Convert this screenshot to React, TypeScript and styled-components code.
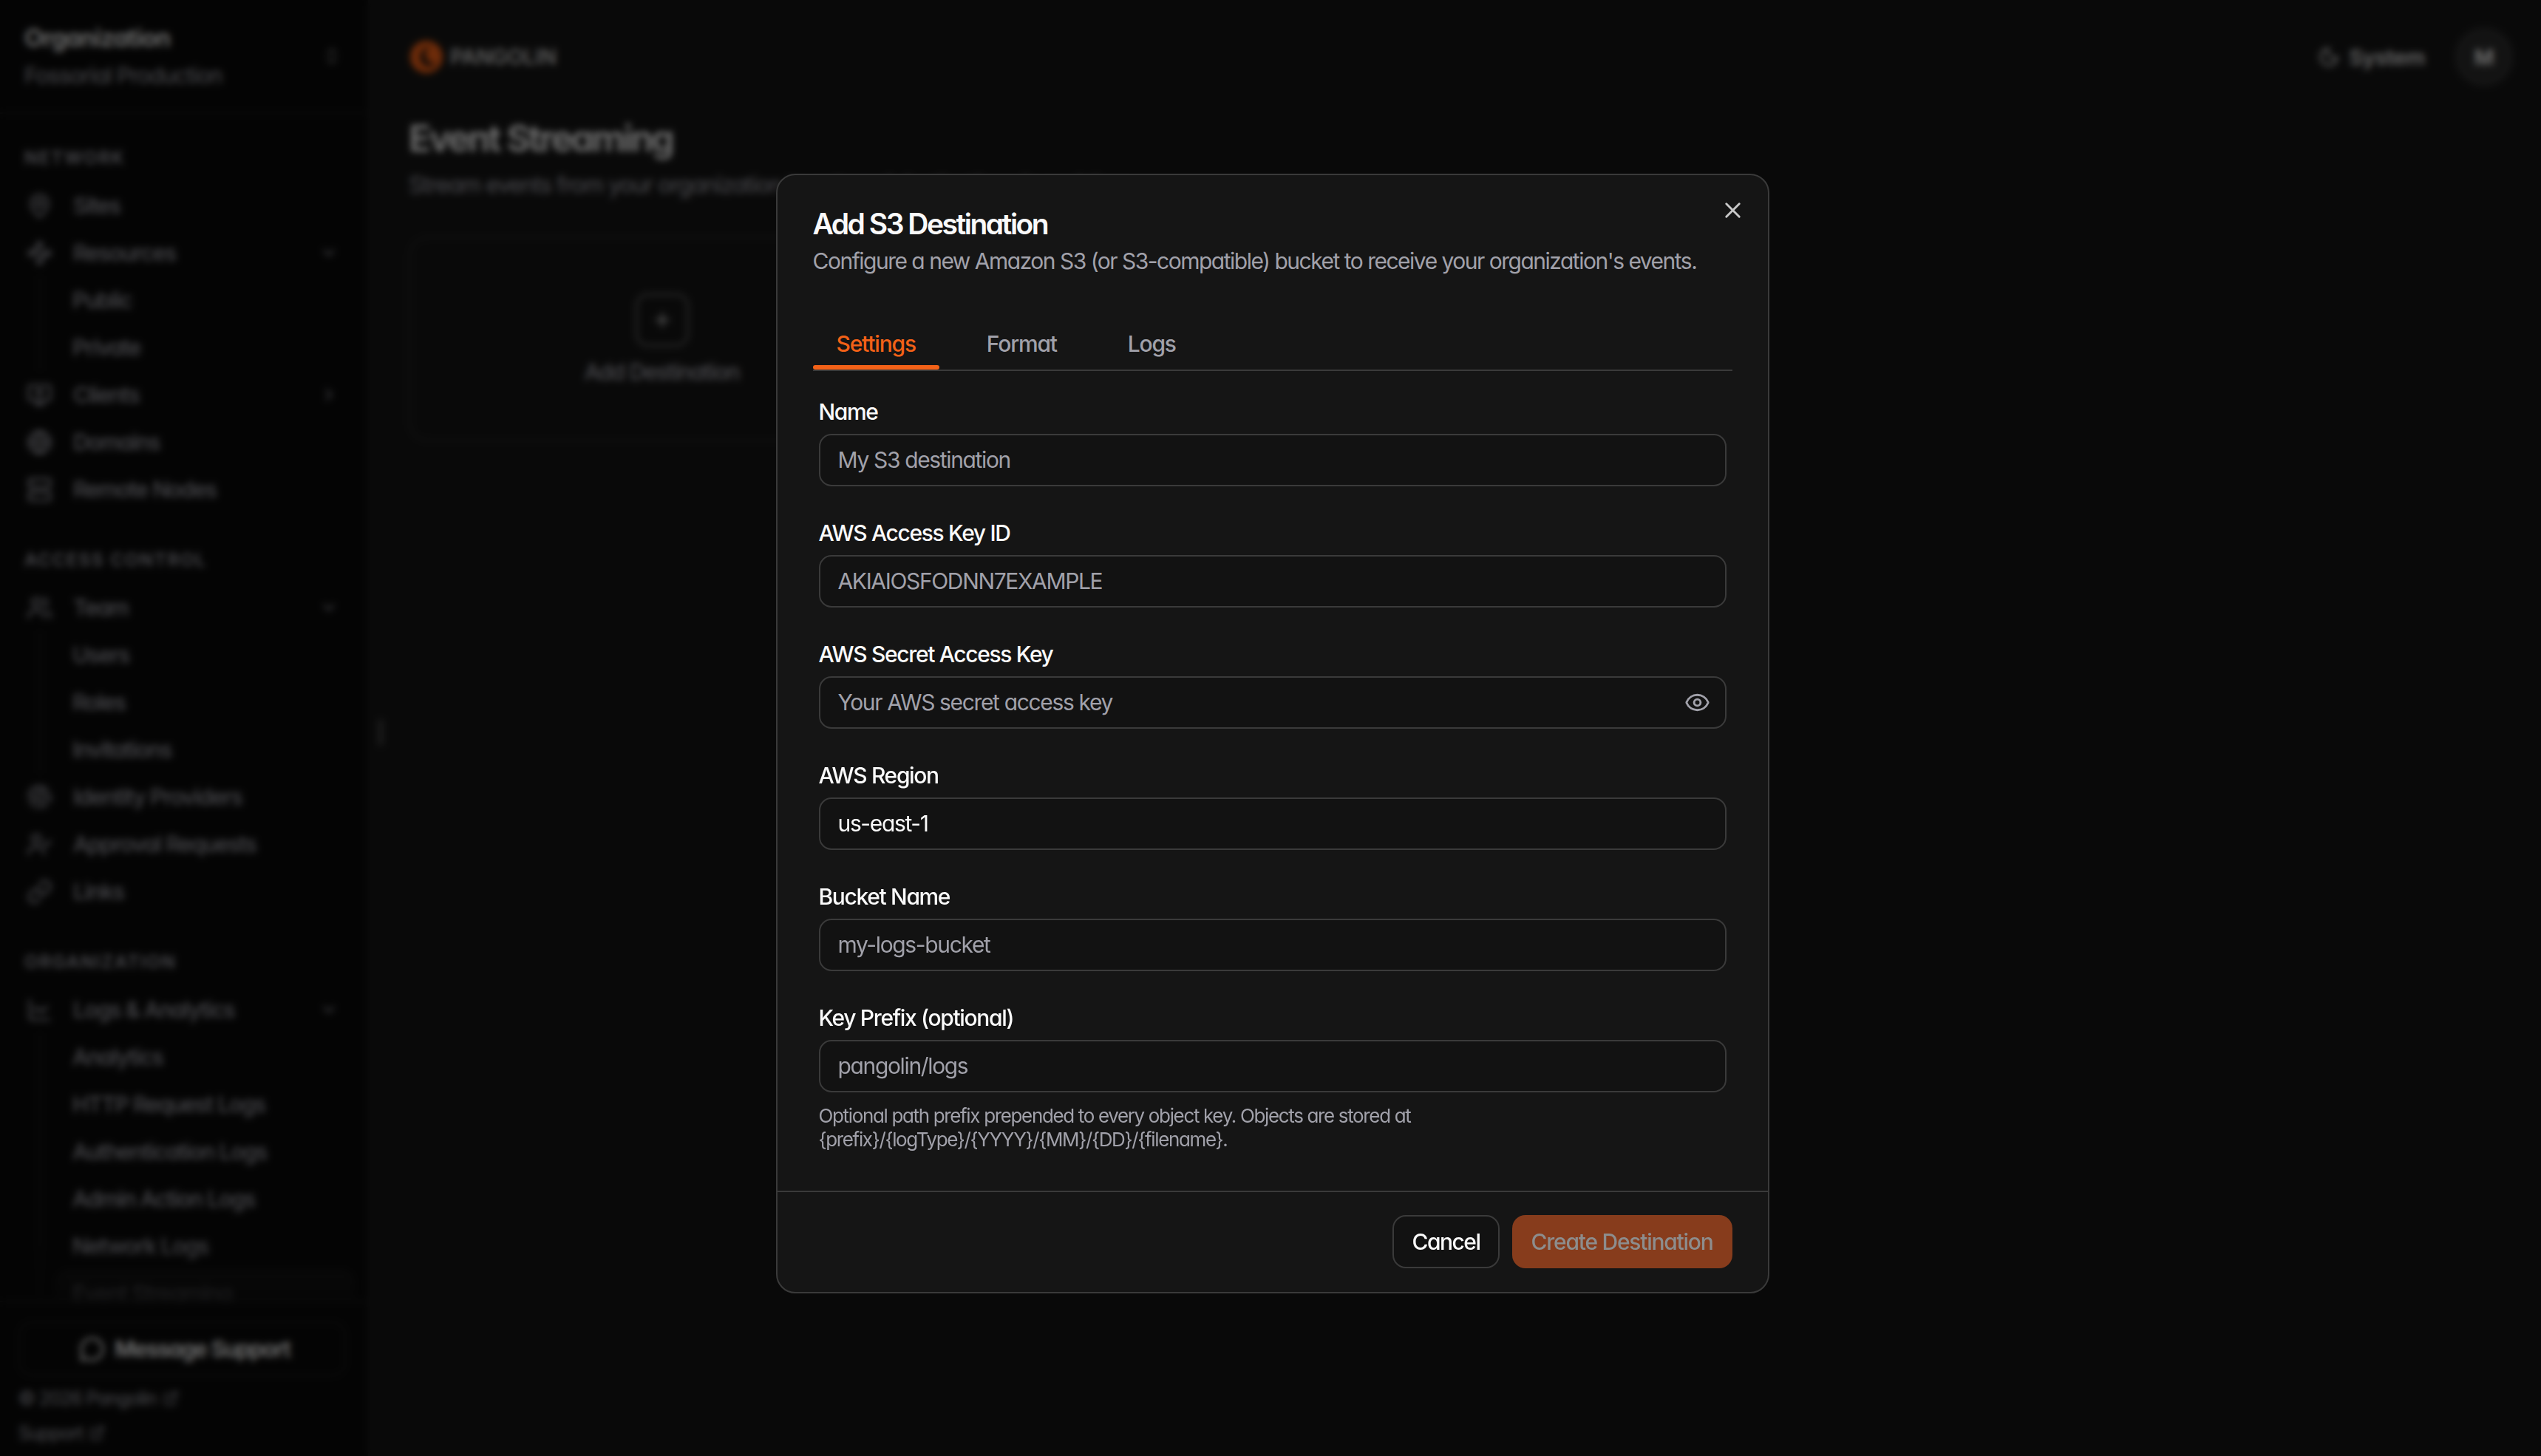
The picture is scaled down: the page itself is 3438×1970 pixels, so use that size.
import React from "react";
import styled, { createGlobalStyle } from "styled-components";
import {
  ChartLine,
  ChevronDown,
  ChevronRight,
  ChevronsUpDown,
  ExternalLink,
  Eye,
  Fingerprint,
  Globe,
  Link,
  MapPin,
  MessageCircle,
  MonitorUp,
  Moon,
  Plus,
  Server,
  UserCheck,
  Users,
  Waypoints,
  X,
} from "lucide-react";

const GlobalStyle = createGlobalStyle`
  html, body { margin: 0; padding: 0; height: 100%; background: #161616; }
  body { font-family: "Inter", "Liberation Sans", sans-serif; font-feature-settings: "cv11" 1; overflow: hidden; }
  * { box-sizing: border-box; }
`;

type NavEntry = {
  label: string;
  icon: React.ElementType;
  chevron?: "down" | "right";
  children?: string[];
};

const sections: { title: string; items: NavEntry[] }[] = [
  {
    title: "Network",
    items: [
      { label: "Sites", icon: MapPin },
      { label: "Resources", icon: Waypoints, chevron: "down", children: ["Public", "Private"] },
      { label: "Clients", icon: MonitorUp, chevron: "right" },
      { label: "Domains", icon: Globe },
      { label: "Remote Nodes", icon: Server },
    ],
  },
  {
    title: "Access Control",
    items: [
      { label: "Team", icon: Users, chevron: "down", children: ["Users", "Roles", "Invitations"] },
      { label: "Identity Providers", icon: Fingerprint },
      { label: "Approval Requests", icon: UserCheck },
      { label: "Links", icon: Link },
    ],
  },
  {
    title: "Organization",
    items: [
      {
        label: "Logs & Analytics",
        icon: ChartLine,
        chevron: "down",
        children: [
          "Analytics",
          "HTTP Request Logs",
          "Authentication Logs",
          "Admin Action Logs",
          "Network Logs",
          "Event Streaming",
        ],
      },
    ],
  },
];

const fields = [
  { label: "Name", value: "My S3 destination" },
  { label: "AWS Access Key ID", value: "AKIAIOSFODNN7EXAMPLE" },
  { label: "AWS Secret Access Key", value: "Your AWS secret access key", eye: true },
  { label: "AWS Region", value: "us-east-1", filled: true },
  { label: "Bucket Name", value: "my-logs-bucket" },
  { label: "Key Prefix (optional)", value: "pangolin/logs" },
];

const App: React.FC = () => (
  <>
    <GlobalStyle />
    <Page>
      <Sidebar>
        <OrgHeader>
          <div>
            <OrgLabel>Organization</OrgLabel>
            <OrgName>Fossorial Production</OrgName>
          </div>
          <ChevronsUpDown size={26} color="#8a8a8a" />
        </OrgHeader>
        <Nav>
          {sections.map((section) => (
            <Section key={section.title}>
              <SectionTitle>{section.title}</SectionTitle>
              {section.items.map((item) => (
                <div key={item.label}>
                  <NavRow>
                    <item.icon size={35} strokeWidth={2} />
                    <NavText>{item.label}</NavText>
                    {item.chevron === "down" && <ChevronDown size={26} />}
                    {item.chevron === "right" && <ChevronRight size={26} />}
                  </NavRow>
                  {item.children && (
                    <SubList>
                      {item.children.map((child) => (
                        <SubRow key={child} $active={child === "Event Streaming"}>
                          {child}
                        </SubRow>
                      ))}
                    </SubList>
                  )}
                </div>
              ))}
            </Section>
          ))}
        </Nav>
        <SidebarFooter>
          <SupportButton>
            <MessageCircle size={35} />
            Message Support
          </SupportButton>
          <FooterLink>
            © 2026 Pangolin <ExternalLink size={22} />
          </FooterLink>
          <FooterLink>
            Support <ExternalLink size={22} />
          </FooterLink>
        </SidebarFooter>
      </Sidebar>
      <ResizeHandle />
      <Main>
        <TopBar>
          <Brand>
            <svg width="46" height="50" viewBox="0 0 46 50">
              <circle cx="24" cy="25" r="22" fill="#f36117" />
              <path d="M30 11a14 14 0 0 0-9 25 14 14 0 0 0 17-3 11 11 0 0 1-8-22z" fill="#111" />
              <circle cx="30" cy="25" r="5" fill="#f36117" />
            </svg>
            <BrandName>PANGOLIN</BrandName>
          </Brand>
          <TopActions>
            <ThemeToggle>
              <Moon size={30} />
              System
            </ThemeToggle>
            <Avatar>M</Avatar>
          </TopActions>
        </TopBar>
        <PageTitle>Event Streaming</PageTitle>
        <PageSubtitle>Stream events from your organization to external destinations in real time.</PageSubtitle>
        <AddCard>
          <AddIcon>
            <Plus size={30} />
          </AddIcon>
          <AddLabel>Add Destination</AddLabel>
        </AddCard>
      </Main>
      <Overlay>
        <Modal>
          <CloseButton aria-label="Close">
            <X size={35} strokeWidth={2} />
          </CloseButton>
          <ModalHeader>
            <ModalTitle>Add S3 Destination</ModalTitle>
            <ModalDescription>
              Configure a new Amazon S3 (or S3-compatible) bucket to receive your organization's events.
            </ModalDescription>
            <Tabs>
              <Tab $active>Settings</Tab>
              <Tab>Format</Tab>
              <Tab>Logs</Tab>
            </Tabs>
          </ModalHeader>
          <Form>
            {fields.map((field) => (
              <Field key={field.label}>
                <FieldLabel>{field.label}</FieldLabel>
                <InputBox>
                  <InputText $filled={field.filled}>{field.value}</InputText>
                  {field.eye && <Eye size={35} color="#a1a1aa" />}
                </InputBox>
              </Field>
            ))}
            <HelpText>
              Optional path prefix prepended to every object key. Objects are stored at{" "}
              {"{prefix}/{logType}/{YYYY}/{MM}/{DD}/{filename}."}
            </HelpText>
          </Form>
          <ModalFooter>
            <CancelButton>Cancel</CancelButton>
            <CreateButton>Create Destination</CreateButton>
          </ModalFooter>
        </Modal>
      </Overlay>
    </Page>
  </>
);

export default App;

// Styles
const Page = styled.div`display: flex; width: 100vw; height: 100vh; position: relative; overflow: hidden; background: #161616; color: #fafafa;`;

const Sidebar = styled.aside`width: 500px; flex: none; height: 100%; display: flex; flex-direction: column; background: #0b0b0b; border-right: 2px solid #1c1c1c;`;
const OrgHeader = styled.div`height: 154px; flex: none; padding: 0 36px 0 33px; display: flex; align-items: center; justify-content: space-between; border-bottom: 2px solid #1c1c1c;`;
const OrgLabel = styled.div`font-size: 33px; line-height: 44px; font-weight: 600; letter-spacing: -0.8px;`;
const OrgName = styled.div`font-size: 30px; line-height: 42px; margin-top: 8px; color: #a1a1aa; letter-spacing: -1.2px;`;
const Nav = styled.nav`
  flex: 1;
  min-height: 0;
  overflow: hidden;
  padding: 37px 18px 0 33px;
  mask-image: linear-gradient(to bottom, #000 calc(100% - 80px), rgba(0, 0, 0, 0.25));
`;
const Section = styled.section`margin-bottom: 41px;`;
const SectionTitle = styled.div`height: 44px; margin-bottom: 11px; display: flex; align-items: center; font-size: 24px; font-weight: 600; letter-spacing: 1.8px; text-transform: uppercase; color: #a1a1aa;`;
const NavRow = styled.div`height: 64px; display: flex; align-items: center; gap: 28px; padding: 0 22px 0 3px; color: #a1a1aa;`;
const NavText = styled.span`flex: 1; font-size: 30px; font-weight: 500; letter-spacing: -1.35px;`;
const SubList = styled.div`margin-left: 20px; padding-left: 20px; border-left: 2px solid #1c1c1c;`;
const SubRow = styled.div<{ $active?: boolean }>`
  height: 64px;
  display: flex;
  align-items: center;
  padding-left: 23px;
  border-radius: 17px;
  font-size: 30px;
  font-weight: 500;
  letter-spacing: -1.35px;
  color: #a1a1aa;
  background: ${(p) => (p.$active ? "#181818" : "transparent")};
`;
const SidebarFooter = styled.div`flex: none; height: 210px; padding: 26px 30px 0 25px; border-top: 2px solid #1c1c1c; background: #0b0b0b;`;
const SupportButton = styled.div`height: 74px; display: flex; align-items: center; justify-content: center; gap: 14px; padding-left: 6px; border: 2px solid #1c1c1c; border-radius: 18px; font-size: 30px; font-weight: 600; letter-spacing: -1.4px;`;
const FooterLink = styled.div`height: 47px; display: flex; align-items: center; gap: 8px; font-size: 25px; color: #a1a1aa; letter-spacing: -1px; &:nth-child(2) { margin-top: 6px; }`;
const ResizeHandle = styled.div`width: 8px; height: 36px; position: absolute; left: 511px; top: 973px; border-radius: 4px; background: #3a3a3a;`;

const Main = styled.main`flex: 1; min-width: 0; padding: 0 0 0 53px;`;
const TopBar = styled.header`height: 154px; display: flex; align-items: center; justify-content: space-between; padding: 0 37px 0 0;`;
const Brand = styled.div`display: flex; align-items: center; gap: 10px;`;
const BrandName = styled.span`font-size: 28px; font-weight: 500; color: #e0e0e0;`;
const TopActions = styled.div`display: flex; align-items: center; gap: 40px;`;
const ThemeToggle = styled.div`display: flex; align-items: center; gap: 12px; font-size: 29px; font-weight: 600; letter-spacing: -0.4px; color: #e0e0e0;`;
const Avatar = styled.div`width: 80px; height: 80px; border-radius: 50%; background: #2c2c2c; display: grid; place-items: center; font-size: 29px; font-weight: 600;`;
const PageTitle = styled.h1`margin: 3px 0 0; font-size: 50px; line-height: 60px; font-weight: 600; letter-spacing: -2.8px;`;
const PageSubtitle = styled.p`margin: 11px 0 0; font-size: 31px; line-height: 44px; letter-spacing: -1.4px; color: #a1a1aa; white-space: nowrap;`;
const AddCard = styled.div`margin-top: 48px; width: 685px; height: 277px; border: 2px dashed #3a3a3a; border-radius: 26px; display: flex; flex-direction: column; align-items: center; justify-content: center; gap: 16px;`;
const AddIcon = styled.div`width: 72px; height: 72px; border: 3px solid #606060; border-radius: 17px; display: grid; place-items: center; color: #d0d0d0;`;
const AddLabel = styled.div`font-size: 30px; font-weight: 500; letter-spacing: -1.35px; color: #a1a1aa;`;

const Overlay = styled.div`position: absolute; inset: 0; display: flex; align-items: center; justify-content: center; padding: 14px 0 0 5px; background: rgba(0, 0, 0, 0.55); backdrop-filter: blur(5px);`;
const Modal = styled.div`position: relative; width: 1344px; height: 1515px; display: flex; flex-direction: column; background: #151515; border: 2px solid #3a3a3a; border-radius: 26px;`;
const CloseButton = styled.button`position: absolute; top: 30px; right: 30px; padding: 0; display: flex; border: 0; background: none; color: #c8c8c8;`;
const ModalHeader = styled.div`padding: 44px 48px 0;`;
const ModalTitle = styled.h2`margin: 0; font-size: 39px; line-height: 44px; font-weight: 600; letter-spacing: -2.5px; color: #fafafa;`;
const ModalDescription = styled.p`margin: 6px 0 0; font-size: 30px; line-height: 44px; letter-spacing: -1.5px; color: #a1a1aa;`;
const Tabs = styled.div`margin-top: 55px; height: 72px; display: flex; gap: 32px; border-bottom: 2px solid #3a3a3a;`;
const Tab = styled.div<{ $active?: boolean }>`
  position: relative;
  padding: 0 32px;
  display: flex;
  align-items: center;
  font-size: 30px;
  font-weight: 500;
  letter-spacing: -1.2px;
  color: ${(p) => (p.$active ? "#f36117" : "#a1a1aa")};
  &::after {
    content: "";
    display: ${(p) => (p.$active ? "block" : "none")};
    position: absolute;
    left: 0;
    right: 0;
    bottom: 0;
    height: 6px;
    border-radius: 3px;
    background: #f36117;
  }
`;
const Form = styled.div`flex: 1; padding: 35px 56px 0; display: flex; flex-direction: column; gap: 43px;`;
const Field = styled.div`display: flex; flex-direction: column; gap: 10px;`;
const FieldLabel = styled.label`font-size: 30px; line-height: 40px; font-weight: 500; letter-spacing: -1.35px; color: #fafafa;`;
const InputBox = styled.div`height: 71px; display: flex; align-items: center; justify-content: space-between; padding: 0 20px 0 24px; border: 2px solid #3a3a3a; border-radius: 17px; background: #121212;`;
const InputText = styled.span<{ $filled?: boolean }>`font-size: 30px; letter-spacing: -1.35px; color: ${(p) => (p.$filled ? "#fafafa" : "#a1a1aa")};`;
const HelpText = styled.p`margin: -27px 0 0; max-width: 840px; font-size: 26px; line-height: 32px; letter-spacing: -1.35px; color: #a1a1aa;`;
const ModalFooter = styled.div`height: 137px; flex: none; display: flex; justify-content: flex-end; align-items: center; gap: 17px; padding: 0 48px; border-top: 2px solid #3a3a3a;`;
const CancelButton = styled.button`height: 72px; padding: 0 24px; font: inherit; font-size: 30px; font-weight: 500; letter-spacing: -1.5px; color: #fafafa; background: #121212; border: 2px solid #3a3a3a; border-radius: 18px;`;
const CreateButton = styled.button`height: 72px; padding: 0 26px; font: inherit; font-size: 30px; font-weight: 500; letter-spacing: -1.25px; color: #8d8d8d; background: #873c1c; border: 0; border-radius: 18px;`;
